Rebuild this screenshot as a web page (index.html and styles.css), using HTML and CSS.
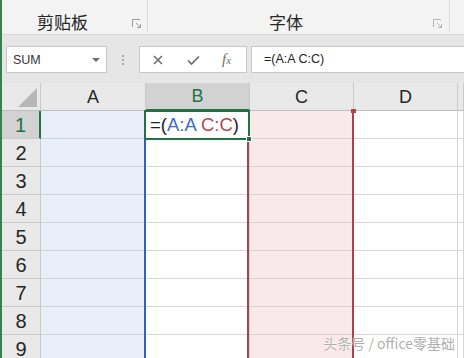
FILE: index.html
```html
<!DOCTYPE html>
<html>
<head>
<meta charset="utf-8">
<link rel="stylesheet" href="styles.css">
</head>
<body>
<div class="app">
  <div class="ribbon">
    <div class="group g1">
      <span class="glabel">剪贴板</span>
      <svg class="launcher" width="10" height="10" viewBox="0 0 10 10"><path d="M0.5 8V0.5H8" fill="none" stroke="#9c9c9c" stroke-width="1"/><path d="M4 4L8.5 8.5M5 8.5H8.5V5" fill="none" stroke="#9c9c9c" stroke-width="1"/></svg>
    </div>
    <div class="group g2">
      <span class="glabel">字体</span>
      <svg class="launcher" width="10" height="10" viewBox="0 0 10 10"><path d="M0.5 8V0.5H8" fill="none" stroke="#b4b4b4" stroke-width="1"/><path d="M4 4L8.5 8.5M5 8.5H8.5V5" fill="none" stroke="#b4b4b4" stroke-width="1"/></svg>
    </div>
    <div class="group g3"></div>
  </div>

  <div class="fbar">
    <div class="namebox"><span>SUM</span><i class="caret"></i></div>
    <div class="grip"><i></i><i></i><i></i></div>
    <div class="btns">
      <svg width="10" height="10" viewBox="0 0 10 10"><path d="M1 1L9 9M9 1L1 9" stroke="#6b6b6b" stroke-width="1.6" fill="none"/></svg>
      <svg width="13" height="10" viewBox="0 0 13 10"><path d="M1 5.5L4.5 9L12 1.5" stroke="#6b6b6b" stroke-width="1.7" fill="none"/></svg>
      <span class="fx">f<span class="x">x</span></span>
    </div>
    <div class="formula">=(A:A C:C)</div>
  </div>

  <div class="sheet">
    <div class="grid">
      <div class="hd corner"><i class="tri"></i></div>
      <div class="hd col">A</div>
      <div class="hd col sel">B</div>
      <div class="hd col">C</div>
      <div class="hd col">D</div>
      <div class="hd col"></div>

      <div class="hd row sel">1</div><div class="c ca"></div><div class="c"></div><div class="c cc"></div><div class="c"></div><div class="c"></div>
      <div class="hd row">2</div><div class="c ca"></div><div class="c"></div><div class="c cc"></div><div class="c"></div><div class="c"></div>
      <div class="hd row">3</div><div class="c ca"></div><div class="c"></div><div class="c cc"></div><div class="c"></div><div class="c"></div>
      <div class="hd row">4</div><div class="c ca"></div><div class="c"></div><div class="c cc"></div><div class="c"></div><div class="c"></div>
      <div class="hd row">5</div><div class="c ca"></div><div class="c"></div><div class="c cc"></div><div class="c"></div><div class="c"></div>
      <div class="hd row">6</div><div class="c ca"></div><div class="c"></div><div class="c cc"></div><div class="c"></div><div class="c"></div>
      <div class="hd row">7</div><div class="c ca"></div><div class="c"></div><div class="c cc"></div><div class="c"></div><div class="c"></div>
      <div class="hd row">8</div><div class="c ca"></div><div class="c"></div><div class="c cc"></div><div class="c"></div><div class="c"></div>
      <div class="hd row">9</div><div class="c ca"></div><div class="c"></div><div class="c cc"></div><div class="c"></div><div class="c"></div>
    </div>

    <div class="rng blue"></div>
    <div class="rng red-l"></div>
    <div class="rng red-r"></div>
    <div class="red-handle"></div>
    <div class="active"><span class="k">=(</span><span class="b">A:A</span><span class="r"> C:C</span><span class="k">)</span></div>
    <div class="handle"></div>
  </div>

  <div class="watermark">头条号 / office零基础</div>
</div>
</body>
</html>
```

FILE: styles.css
```css
* { box-sizing: border-box; }
html, body { margin: 0; padding: 0; background: #fff; }
.app {
  position: relative;
  width: 464px;
  height: 358px;
  overflow: hidden;
  border-left: 2px solid #3d7d52;
  font-family: "Liberation Sans", Arial, "Noto Sans CJK SC", sans-serif;
  color: #222;
}

/* Ribbon */
.ribbon {
  height: 35px;
  background: #f3f3f3;
  border-bottom: 1px solid #d5d5d5;
  display: flex;
}
.group {
  position: relative;
  height: 32px;
  display: flex;
  align-items: flex-start;
}
.g1 { width: 146px; border-right: 1px solid #dcdcdc; padding-left: 35px; }
.g2 { width: 302px; border-right: 1px solid #dcdcdc; padding-left: 121px; }
.g3 { flex: 1; }
.glabel {
  font-family: "Noto Sans CJK SC", sans-serif;
  font-size: 17px;
  line-height: 22px;
  padding-top: 11px;
  color: #262626;
}
.launcher { position: absolute; top: 19px; }
.g1 .launcher { left: 130px; }
.g2 .launcher { left: 285px; }

/* Formula bar */
.fbar {
  height: 48px;
  background: #e6e6e6;
  display: flex;
  align-items: flex-start;
  padding-top: 11px;
  padding-left: 4px;
}
.namebox {
  width: 101px;
  height: 27px;
  background: #fff;
  border: 1px solid #c8c8c8;
  display: flex;
  align-items: center;
  justify-content: space-between;
  padding: 0 6px 0 6px;
  font-size: 12.5px;
  color: #333;
}
.caret {
  width: 0; height: 0;
  border-left: 4px solid transparent;
  border-right: 4px solid transparent;
  border-top: 4px solid #6a6a6a;
}
.grip {
  width: 32px;
  height: 27px;
  display: flex;
  flex-direction: column;
  align-items: center;
  justify-content: center;
  gap: 2px;
}
.grip i { display: block; width: 2px; height: 2px; background: #a8a8a8; }
.btns {
  width: 108px;
  height: 27px;
  background: #fff;
  border: 1px solid #c8c8c8;
  display: flex;
  align-items: center;
  padding-left: 13px;
  gap: 24px;
}
.fx {
  font-family: "Liberation Serif", serif;
  font-style: italic;
  font-size: 15px;
  color: #6b6b6b;
  margin-left: -2px;
}
.fx .x { font-size: 11px; }
.formula {
  margin-left: 4px;
  flex: 1;
  height: 27px;
  background: #fff;
  border: 1px solid #c8c8c8;
  border-right: none;
  font-size: 12.5px;
  line-height: 25px;
  padding-left: 12px;
  color: #222;
}

/* Sheet */
.sheet { position: relative; }
.grid {
  display: grid;
  grid-template-columns: 39px 105px 104px 104px 104px 6px;
  grid-auto-rows: 28px;
}
.hd {
  background: #e9e9e9;
  border-right: 1px solid #c9c9c9;
  border-bottom: 1px solid #c9c9c9;
  display: flex;
  align-items: center;
  justify-content: center;
  color: #262626;
}
.corner { position: relative; border-bottom: 1px solid #bdbdbd; }
.tri {
  position: absolute;
  right: 3px; bottom: 3px;
  width: 0; height: 0;
  border-left: 19px solid transparent;
  border-bottom: 19px solid #b7b7b7;
}
.col { font-size: 18px; padding-top: 1px; border-bottom-color: #bdbdbd; }
.col.sel { background: #d2d2d2; color: #217346; border-bottom: 2px solid #217346; }
.row { font-size: 20px; padding-top: 2px; }
.row.sel { background: #d2d2d2; color: #217346; border-right: 2px solid #217346; }
.c {
  background: #fff;
  border-right: 1px solid #d6d6d6;
  border-bottom: 1px solid #d6d6d6;
}
.ca { background: #e9eff9; border-bottom-color: #cdd2da; border-right: none; }
.cc { background: #f9e9ea; border-bottom-color: #dccfd0; }

/* overlays */
.rng { position: absolute; width: 2px; bottom: 0; }
.blue { left: 142px; top: 56px; background: #2f63c2; }
.red-l { left: 245px; top: 28px; background: #b0404a; }
.red-r { left: 350px; top: 28px; background: #b0404a; }
.red-handle { position: absolute; left: 349px; top: 26px; width: 5px; height: 4px; background: #b0404a; }
.active {
  position: absolute;
  left: 142px; top: 27px;
  width: 106px; height: 30px;
  border: 2px solid #217346;
  background: #fff;
  font-size: 18.5px;
  line-height: 26px;
  padding-left: 4px;
  white-space: nowrap;
}
.active .k { color: #222; }
.active .b { color: #3e6cc0; }
.active .r { color: #b5474e; }
.handle {
  position: absolute;
  left: 244px; top: 53px;
  width: 6px; height: 6px;
  background: #217346;
  border: 1px solid #fff;
}

.watermark {
  position: absolute;
  right: 9px;
  bottom: 5px;
  font-family: "Noto Sans CJK SC", sans-serif;
  font-size: 14px;
  color: rgba(160,160,160,0.85);
  text-shadow: 0 0 2px #fff, 0 0 1px #fff;
}
```
